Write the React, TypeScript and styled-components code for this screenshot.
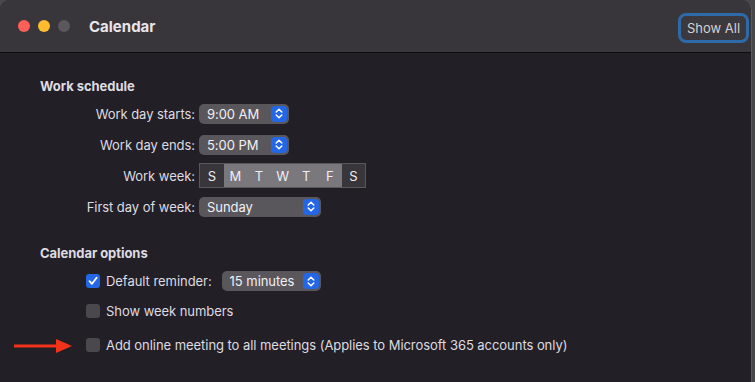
import React from 'react';
import styled, { createGlobalStyle } from 'styled-components';

const GlobalStyle = createGlobalStyle`
  html, body {
    margin: 0;
    padding: 0;
    background: #48474a;
    font-family: Inter, "Liberation Sans", sans-serif;
    -webkit-font-smoothing: antialiased;
  }
`;

const Window = styled.div`
  width: 751px;
  height: 382px;
  background: #231f27;
  border-top-left-radius: 10px;
  border-top-right-radius: 10px;
  border-right: 1px solid #5c5a5f;
  overflow: hidden;
  display: flex;
  flex-direction: column;
`;

const TitleBar = styled.div`
  height: 52px;
  flex: none;
  background: #38353b;
  border-bottom: 1px solid #0e0c10;
  display: flex;
  align-items: center;
  padding: 0 2px 0 18px;
`;

const Light = styled.span<{ $color: string }>`
  width: 12px;
  height: 12px;
  border-radius: 50%;
  background: ${p => p.$color};
  margin-right: 8px;
`;

const Title = styled.div`
  margin-left: 11px;
  font-size: 15px;
  font-weight: 700;
  color: #e8e6ea;
  flex: 1;
`;

const ShowAll = styled.button`
  width: 71px;
  height: 30px;
  margin-top: 4px;
  border: 3px solid #2e6aa8;
  border-radius: 8px;
  background: #3b383e;
  color: #d4d2d6;
  font-family: inherit;
  font-size: 13px;
  padding: 0;
`;

const Body = styled.div`
  padding: 25px 0 0 40px;
  color: #dedce0;
  font-size: 13px;
  letter-spacing: -0.05px;
`;

const Heading = styled.div<{ $top?: number }>`
  font-weight: 700;
  line-height: 16px;
  margin-top: ${p => p.$top ?? 0}px;
`;

const Form = styled.div`
  margin-top: 4px;
  display: grid;
  grid-template-columns: 159px auto;
  grid-auto-rows: 31px;
  align-items: center;
  justify-items: start;
`;

const Label = styled.div`
  justify-self: end;
  margin-right: 4px;
`;

const Popup = styled.div<{ $width: number }>`
  width: ${p => p.$width}px;
  height: 20px;
  box-sizing: border-box;
  border-radius: 5px;
  background: #59565c;
  color: #f2f0f4;
  display: flex;
  align-items: center;
  justify-content: space-between;
  padding: 0 2px 0 8px;
`;

const Stepper = styled.span`
  width: 16px;
  height: 16px;
  border-radius: 4px;
  background: #2467e6;
  display: flex;
  align-items: center;
  justify-content: center;
`;

const Segments = styled.div`
  display: flex;
  height: 25px;
  border: 1px solid #5a575c;
  box-sizing: border-box;
`;

const Segment = styled.div<{ $on: boolean }>`
  width: 23.6px;
  display: flex;
  align-items: center;
  justify-content: center;
  background: ${p => (p.$on ? '#7a777d' : '#38353b')};
  color: #f0eef2;
`;

const Options = styled.div`
  padding-left: 46px;
  margin-top: 5px;
  display: flex;
  flex-direction: column;
`;

const CheckRow = styled.div<{ $extra?: number }>`
  position: relative;
  height: 30px;
  margin-top: ${p => p.$extra ?? 0}px;
  display: flex;
  align-items: center;
`;

const Box = styled.span<{ $checked?: boolean }>`
  width: 14px;
  height: 14px;
  border-radius: 3px;
  background: ${p => (p.$checked ? '#2467e6' : '#4a474d')};
  display: flex;
  align-items: center;
  justify-content: center;
  margin-right: 6px;
  flex: none;
`;

const ReminderLabel = styled.span`
  margin-right: 10px;
`;

const Arrow = styled.svg`
  position: absolute;
  left: -72px;
  top: 8px;
`;

const Chevrons = () => (
  <svg width="8" height="11" viewBox="0 0 8 11">
    <path d="M1.2 4 L4 1.3 L6.8 4 M1.2 7 L4 9.7 L6.8 7" fill="none" stroke="#fff" strokeWidth="1.5" strokeLinecap="round" strokeLinejoin="round" />
  </svg>
);

const Select: React.FC<{ value: string; width: number }> = ({ value, width }) => (
  <Popup $width={width}>
    {value}
    <Stepper>
      <Chevrons />
    </Stepper>
  </Popup>
);

const days = ['S', 'M', 'T', 'W', 'T', 'F', 'S'];

export default function App() {
  return (
    <>
      <GlobalStyle />
      <Window>
        <TitleBar>
          <Light $color="#fe5f57" />
          <Light $color="#febc2e" />
          <Light $color="#5a575d" />
          <Title>Calendar</Title>
          <ShowAll>Show All</ShowAll>
        </TitleBar>
        <Body>
          <Heading>Work schedule</Heading>
          <Form>
            <Label>Work day starts:</Label>
            <Select value="9:00 AM" width={90} />
            <Label>Work day ends:</Label>
            <Select value="5:00 PM" width={90} />
            <Label>Work week:</Label>
            <Segments>
              {days.map((d, i) => (
                <Segment key={i} $on={i > 0 && i < 6}>{d}</Segment>
              ))}
            </Segments>
            <Label>First day of week:</Label>
            <Select value="Sunday" width={122} />
          </Form>

          <Heading $top={23}>Calendar options</Heading>
          <Options>
            <CheckRow>
              <Box $checked>
                <svg width="10" height="10" viewBox="0 0 10 10">
                  <path d="M1.5 5.2 L4 7.8 L8.6 1.8" fill="none" stroke="#fff" strokeWidth="1.8" strokeLinecap="round" strokeLinejoin="round" />
                </svg>
              </Box>
              <ReminderLabel>Default reminder:</ReminderLabel>
              <Select value="15 minutes" width={99} />
            </CheckRow>
            <CheckRow>
              <Box />
              Show week numbers
            </CheckRow>
            <CheckRow $extra={4}>
              <Arrow width="60" height="16" viewBox="0 0 60 16">
                <path d="M0 8 H46" stroke="#f2331a" strokeWidth="3" />
                <path d="M42 1 L58 8 L42 15 Z" fill="#f2331a" />
              </Arrow>
              <Box />
              Add online meeting to all meetings (Applies to Microsoft 365 accounts only)
            </CheckRow>
          </Options>
        </Body>
      </Window>
    </>
  );
}
